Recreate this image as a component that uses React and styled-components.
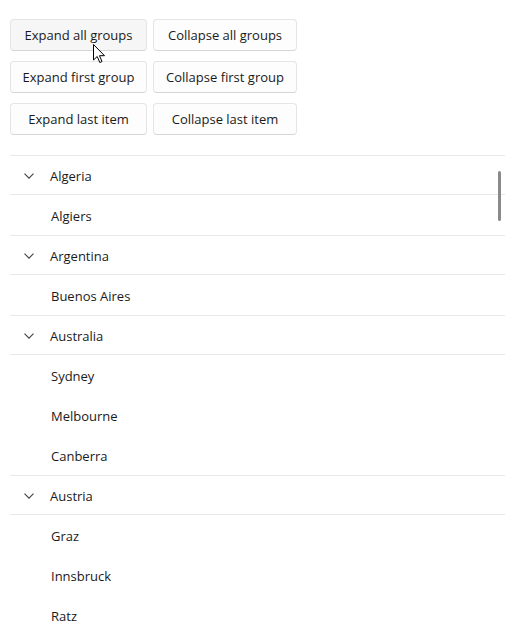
import React from "react";
import styled, { createGlobalStyle } from "styled-components";

const Global = createGlobalStyle`
  html, body { margin: 0; padding: 0; background: #ffffff; overflow: hidden; }
  body { font-family: "Segoe UI", "Open Sans", "Noto Sans", sans-serif; color: #1a1a1a; }
`;

const Page = styled.div`
  position: relative;
  padding: 19px 14px 0 10px;
  display: flex;
  flex-direction: column;
  gap: 20px;
`;

const ButtonGrid = styled.div`
  display: grid;
  grid-template-columns: 137px 144px;
  column-gap: 6px;
  row-gap: 10px;
`;

const Button = styled.button`
  height: 32px;
  box-sizing: border-box;
  border: 1px solid #e5e5e5;
  border-bottom-color: #d6d6d6;
  border-radius: 4px;
  background: ${(p) => (p.$hover ? "#f6f6f6" : "#fdfdfd")};
  font-family: inherit;
  font-size: 13px;
  color: #1a1a1a;
  padding: 0 8px;
  white-space: nowrap;
  cursor: default;
`;

const List = styled.div`
  position: relative;
  display: flex;
  flex-direction: column;
`;

const GroupHeader = styled.div`
  height: 40px;
  box-sizing: border-box;
  border-top: 1px solid #e8e8e8;
  border-bottom: 1px solid #e8e8e8;
  display: flex;
  align-items: center;
  gap: 16px;
  padding: 1px 0 0 14px;
  font-size: 13px;
`;

const Item = styled.div`
  height: 40px;
  box-sizing: border-box;
  display: flex;
  align-items: center;
  padding: 2px 0 0 41px;
  font-size: 13px;
`;

const Thumb = styled.div`
  position: absolute;
  right: 4px;
  top: 16px;
  width: 3px;
  height: 50px;
  border-radius: 2px;
  background: #8a8a8a;
`;

const Cursor = styled.svg`
  position: absolute;
  left: 93px;
  top: 44px;
`;

const Chevron = () => (
  <svg width="10" height="6" viewBox="0 0 10 6">
    <polyline points="0.5,0.6 5,5.2 9.5,0.6" fill="none" stroke="#404040" strokeWidth="1.1" />
  </svg>
);

const data = [
  ["Algeria", ["Algiers"]],
  ["Argentina", ["Buenos Aires"]],
  ["Australia", ["Sydney", "Melbourne", "Canberra"]],
  ["Austria", ["Graz", "Innsbruck", "Ratz"]],
];

export default function App() {
  return (
    <>
      <Global />
      <Page>
        <ButtonGrid>
          <Button $hover>Expand all groups</Button>
          <Button>Collapse all groups</Button>
          <Button>Expand first group</Button>
          <Button>Collapse first group</Button>
          <Button>Expand last item</Button>
          <Button>Collapse last item</Button>
        </ButtonGrid>
        <List>
          {data.map(([country, cities]) => (
            <React.Fragment key={country}>
              <GroupHeader>
                <Chevron />
                <span>{country}</span>
              </GroupHeader>
              {cities.map((c) => (
                <Item key={c}>{c}</Item>
              ))}
            </React.Fragment>
          ))}
          <Thumb />
        </List>
        <Cursor width="13" height="20" viewBox="0 0 13 20">
          <path d="M0.5,0.5 L0.5,16 L4.2,12.5 L6.8,18.5 L9,17.5 L6.5,11.7 L11.5,11.7 Z" fill="#ffffff" stroke="#000000" strokeWidth="1" strokeLinejoin="round" />
        </Cursor>
      </Page>
    </>
  );
}
